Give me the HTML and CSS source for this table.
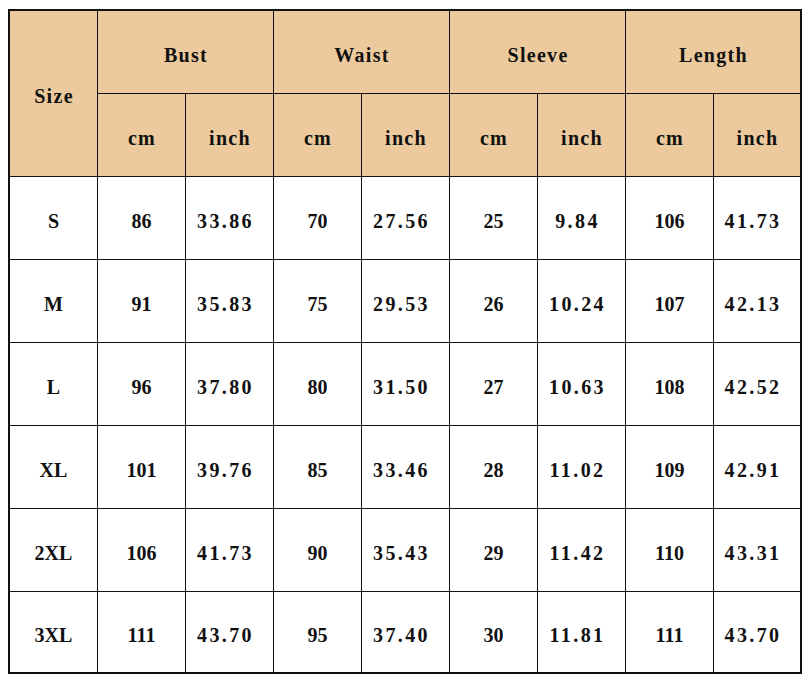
FILE: index.html
```html
<!DOCTYPE html>
<html lang="en">
<head>
<meta charset="utf-8">
<title>Size Chart</title>
<link rel="stylesheet" href="styles.css">
</head>
<body>
<div class="wrap">
<table class="chart">
  <colgroup>
    <col class="c"><col class="c"><col class="c"><col class="c"><col class="c"><col class="c"><col class="c"><col class="c"><col>
  </colgroup>
  <thead>
    <tr>
      <th rowspan="2" class="hd">Size</th>
      <th colspan="2" class="hd">Bust</th>
      <th colspan="2" class="hd">Waist</th>
      <th colspan="2" class="hd">Sleeve</th>
      <th colspan="2" class="hd">Length</th>
    </tr>
    <tr>
      <th class="hd">cm</th><th class="hd">inch</th>
      <th class="hd">cm</th><th class="hd">inch</th>
      <th class="hd">cm</th><th class="hd">inch</th>
      <th class="hd">cm</th><th class="hd">inch</th>
    </tr>
  </thead>
  <tbody>
    <tr><td class="sz">S</td><td class="int">86</td><td class="dec">33.86</td><td class="int">70</td><td class="dec">27.56</td><td class="int">25</td><td class="dec">9.84</td><td class="int">106</td><td class="dec">41.73</td></tr>
    <tr><td class="sz">M</td><td class="int">91</td><td class="dec">35.83</td><td class="int">75</td><td class="dec">29.53</td><td class="int">26</td><td class="dec">10.24</td><td class="int">107</td><td class="dec">42.13</td></tr>
    <tr><td class="sz">L</td><td class="int">96</td><td class="dec">37.80</td><td class="int">80</td><td class="dec">31.50</td><td class="int">27</td><td class="dec">10.63</td><td class="int">108</td><td class="dec">42.52</td></tr>
    <tr><td class="sz">XL</td><td class="int">101</td><td class="dec">39.76</td><td class="int">85</td><td class="dec">33.46</td><td class="int">28</td><td class="dec">11.02</td><td class="int">109</td><td class="dec">42.91</td></tr>
    <tr><td class="sz">2XL</td><td class="int">106</td><td class="dec">41.73</td><td class="int">90</td><td class="dec">35.43</td><td class="int">29</td><td class="dec">11.42</td><td class="int">110</td><td class="dec">43.31</td></tr>
    <tr><td class="sz">3XL</td><td class="int">111</td><td class="dec">43.70</td><td class="int">95</td><td class="dec">37.40</td><td class="int">30</td><td class="dec">11.81</td><td class="int">111</td><td class="dec">43.70</td></tr>
  </tbody>
</table>
</div>
</body>
</html>
```
FILE: styles.css
```css
html, body {
  margin: 0;
  padding: 0;
  background: #fff;
}
.wrap {
  padding: 9px 0 0 8px;
}
.chart {
  border: 2px solid #111;
  border-spacing: 0;
  table-layout: fixed;
  width: 794px;
  color: #111;
  font-family: "Liberation Serif", "Times New Roman", serif;
  font-weight: bold;
}
.chart .c {
  width: 88px;
}
.chart th,
.chart td {
  height: 83px;
  padding: 6px 0 0 0;
  text-align: center;
  vertical-align: middle;
  border-right: 1px solid #111;
  border-bottom: 1px solid #111;
  box-sizing: border-box;
}
.chart tr > :last-child {
  border-right: none;
}
.chart tbody tr:last-child > * {
  border-bottom: none;
  height: 80px;
}
.hd {
  background: #ecca9d;
  font-size: 20px;
  letter-spacing: 1.3px;
}
.chart .hd {
  padding-left: 1px;
}
.int, .sz {
  font-size: 20px;
}
.dec {
  font-size: 20px;
  letter-spacing: 2.4px;
}
.chart .dec {
  padding-right: 8px;
}
```
